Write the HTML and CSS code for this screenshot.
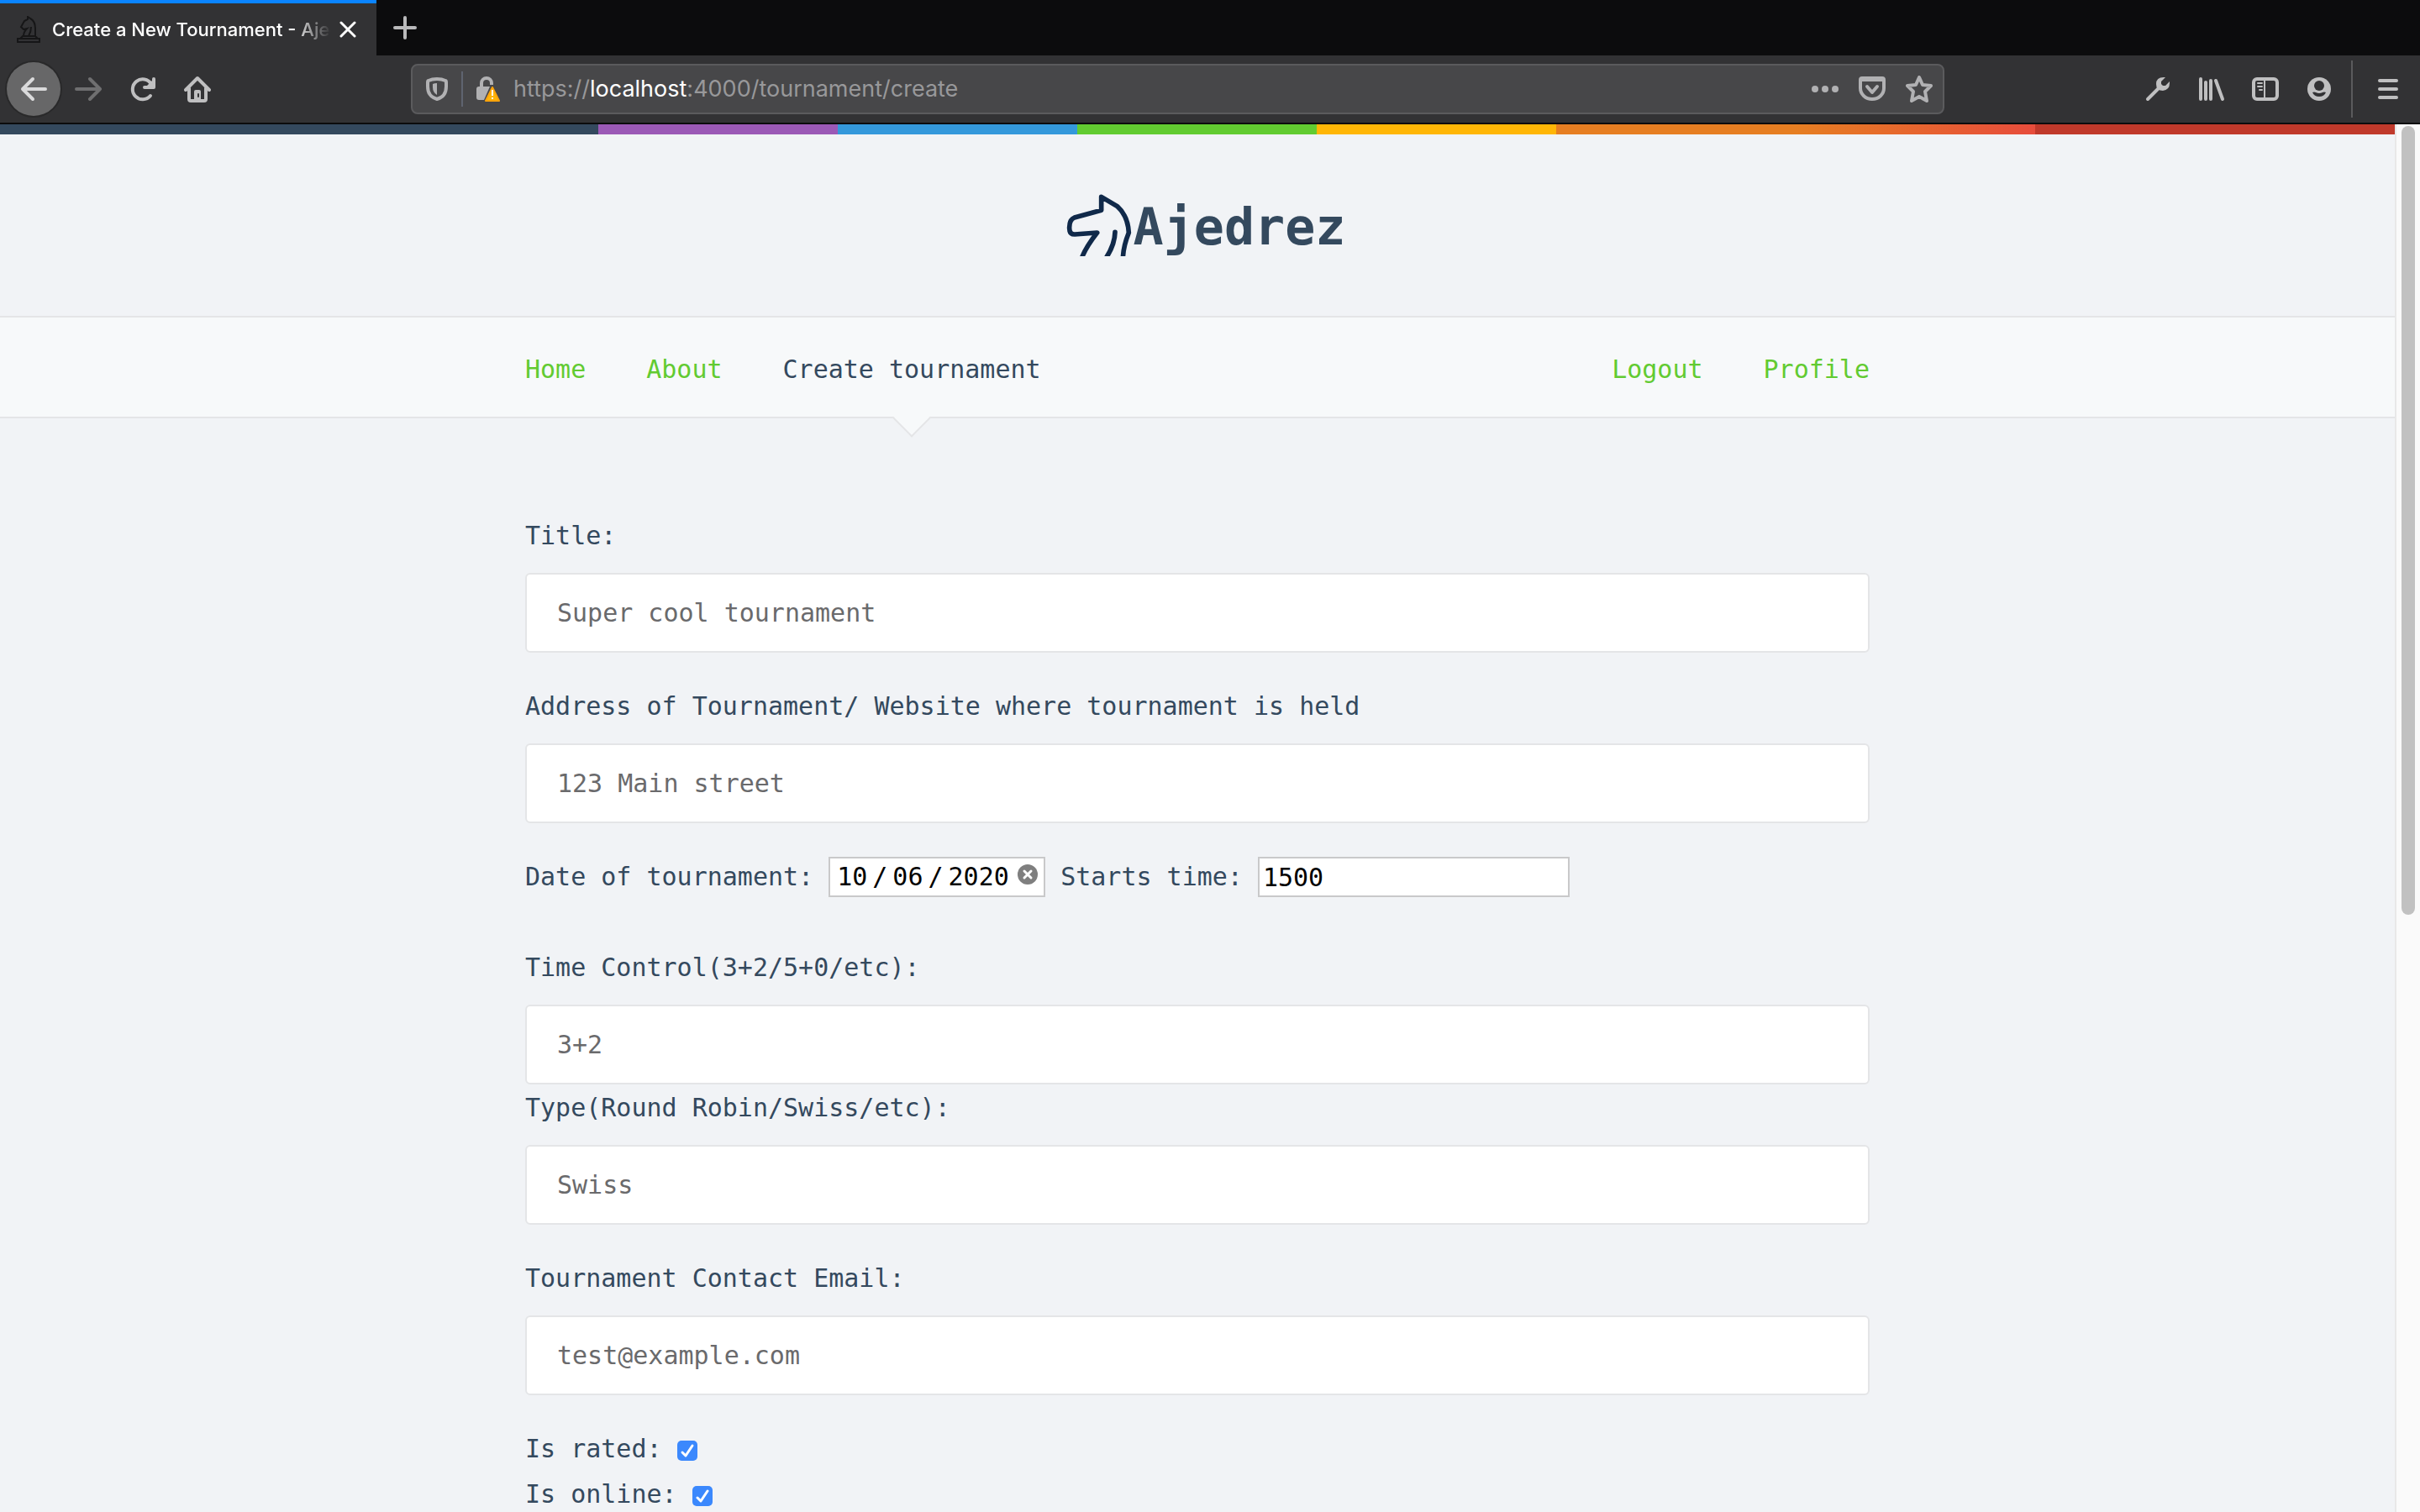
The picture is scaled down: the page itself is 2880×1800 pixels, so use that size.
FILE: index.html
```html
<!DOCTYPE html>
<html lang="en-US">
<head>
<meta charset="utf-8">
<title>Create a New Tournament - Ajedrez</title>
<link rel="stylesheet" href="styles.css">
</head>
<body>
<div class="browser">
  <div class="tabstrip">
    <div class="tab">
      <svg class="favicon" viewBox="0 0 28 32" fill="none" stroke="#161617" stroke-width="2"><path d="M1 31v-4h26v4zM4 27l3-3h15l3 3M8 24q0-5 4-9l-4 1-3-3 4-7 4-2V1l3 2q6 3 6 12v9M14 24q3-5 3-11"/></svg>
      <span class="tab-title">Create a New Tournament - Ajedrez</span>
      <button class="tab-close" aria-label="Close tab"><svg width="20" height="20" viewBox="0 0 20 20" fill="none" stroke="#fff" stroke-width="3" stroke-linecap="round"><path d="M2 2l16 16M18 2L2 18"/></svg></button>
    </div>
    <button class="new-tab" aria-label="New tab"><svg width="28" height="28" viewBox="0 0 28 28" fill="none" stroke="#b9b9ba" stroke-width="4" stroke-linecap="round"><path d="M14 2v24M2 14h24"/></svg></button>
  </div>

  <div class="toolbar">
    <div class="tool-group">
      <button class="tool tool-back" aria-label="Back"><svg class="icon" viewBox="0 0 32 32"><path d="M30 16H3M15 4L3 16l12 12"/></svg></button>
      <button class="tool tool-off" aria-label="Forward"><svg class="icon" viewBox="0 0 32 32"><path d="M2 16h28M18 4l12 12-12 12"/></svg></button>
      <button class="tool" aria-label="Reload"><svg class="icon" viewBox="0 0 32 32"><path d="M25 24a12 12 0 1 1 1-14M29 4v10h-11"/><path d="M29 4v10h-10z" fill="currentColor" stroke="none"/></svg></button>
      <button class="tool" aria-label="Home"><svg class="icon" viewBox="0 0 32 32"><path d="M2 17L16 3l14 14M6 15v13q0 2 2 2h16q2 0 2-2V15"/><path d="M12 30V19q0-2 2-2h4q2 0 2 2v11z" fill="currentColor" stroke="none"/><path d="M17 22v3" stroke="#323234" stroke-width="2"/></svg></button>
    </div>

    <div class="urlbar">
      <button class="url-shield" aria-label="Tracking protection"><svg width="26" height="28" viewBox="0 0 26 28"><path d="M13 2q6 0 10 2 1 0 1 2v5q0 12-11 15Q2 23 2 11V6q0-2 1-2 4-2 10-2z" fill="none" stroke="currentColor" stroke-width="4"/><path d="M13 7v14q-5-3-5-9V8q2-1 5-1z" fill="currentColor"/></svg></button>
      <button class="url-lock" aria-label="Connection not secure"><svg width="30" height="30" viewBox="0 0 30 30"><path d="M6 13V8a6 6 0 0 1 12 0v2" fill="none" stroke="currentColor" stroke-width="4"/><path d="M3 12h13L9 28H3q-3 0-3-3V15q0-3 3-3z" fill="currentColor"/><path d="M19 13L27 29H11z" fill="#ffb60a" stroke="#ffa40a" stroke-width="2" stroke-linejoin="round"/><path d="M19 16v7M19 25v2" stroke="#fff" stroke-width="2"/></svg></button>
      <span class="url">https://<b>localhost</b>:4000/tournament/create</span>
      <span class="url-actions">
        <button class="url-action" aria-label="Page actions"><svg width="32" height="8" viewBox="0 0 32 8" fill="currentColor"><circle cx="4" cy="4" r="4"/><circle cx="16" cy="4" r="4"/><circle cx="28" cy="4" r="4"/></svg></button>
        <button class="url-action" aria-label="Save to Pocket"><svg class="icon" viewBox="0 0 32 32"><path d="M4 3h24q2 0 2 2v10a14 13 0 0 1-28 0V5q0-2 2-2zM3 5h26M10 13l6 7 6-7"/></svg></button>
        <button class="url-action" aria-label="Bookmark"><svg class="icon" viewBox="0 0 32 32"><path d="M16 2l4 9 10 1-7 7 2 11-9-5-9 5 2-11-7-7 10-1z"/></svg></button>
      </span>
    </div>

    <button class="tool" aria-label="Tools"><svg class="icon" viewBox="0 0 32 32"><path d="M4 28L17 15"/><path d="M25 2q-11-1-11 8 0 8 8 8 8-1 8-9V7l-5 5h-3l-2-2V7z" fill="currentColor" stroke="none"/></svg></button>
    <button class="tool" aria-label="Library"><svg class="icon" viewBox="0 0 32 32"><path d="M3 4v24M9 8v20M15 6v22M21 6l8 22"/></svg></button>
    <button class="tool" aria-label="Sidebar"><svg class="icon" viewBox="0 0 32 32"><rect x="2" y="4" width="28" height="24" rx="4"/><path d="M15 4v24" stroke-width="2"/><path d="M7 9h5M7 13h5M9 17h3" stroke-width="2"/></svg></button>
    <button class="tool" aria-label="Account"><svg class="icon" viewBox="0 0 32 32"><circle cx="16" cy="16" r="14" fill="currentColor" stroke="none"/><circle cx="16" cy="12" r="6" fill="#323234" stroke="none"/><path d="M8 20q2-1 4 0 4 2 8 0 2-1 4 0-2 5-8 5t-8-5z" fill="#323234" stroke="none"/></svg></button>
    <span class="tool-divider"></span>
    <button class="tool" aria-label="Menu"><svg class="icon" viewBox="0 0 32 32"><path d="M6 6h20M6 16h20M6 26h20"/></svg></button>
  </div>

  <div class="viewport">
    <div class="page">
      <div class="stripe"></div>
      <header class="masthead">
        <svg class="logo" viewBox="86 94 300 222" fill="none" stroke="#10294a" stroke-width="17" stroke-linejoin="round" stroke-linecap="round"><path d="M200 325Q214 286 256 232L176 238Q157 238 157 216 156 186 175 178L271 152V104L328 138Q366 172 369 232 349 282 348 325M288 322Q319 274 320 230"/></svg>
        <h1 class="brand">Ajedrez</h1>
      </header>

      <nav class="nav">
        <div class="nav-inner">
          <a class="nav-link" href="#">Home</a>
          <a class="nav-link" href="#">About</a>
          <a class="nav-link nav-current" href="#">Create tournament</a>
          <a class="nav-link nav-right" href="#">Logout</a>
          <a class="nav-link" href="#">Profile</a>
        </div>
      </nav>

      <form class="form">
        <div class="field">
          <label for="title">Title:</label>
          <input class="text" id="title" type="text" placeholder="Super cool tournament">
        </div>
        <div class="field">
          <label for="address">Address of Tournament/ Website where tournament is held</label>
          <input class="text" id="address" type="text" placeholder="123 Main street">
        </div>
        <div class="when">
          <label for="date">Date of tournament:</label>
          <span class="date-wrap">
            <input class="small date" id="date" type="date" value="2020-10-06">
            <button class="date-clear" type="button" aria-label="Clear date"><svg width="24" height="24" viewBox="0 0 24 24"><circle cx="12" cy="12" r="12" fill="#7f7f7f"/><path d="M8 8l8 8M16 8l-8 8" stroke="#fff" stroke-width="3" stroke-linecap="round"/></svg></button>
          </span>
          <label for="start">Starts time:</label>
          <input class="small time" id="start" type="text" value="1500">
        </div>
        <div class="field field-tight">
          <label for="control">Time Control(3+2/5+0/etc):</label>
          <input class="text" id="control" type="text" placeholder="3+2">
        </div>
        <div class="field">
          <label for="type">Type(Round Robin/Swiss/etc):</label>
          <input class="text" id="type" type="text" placeholder="Swiss">
        </div>
        <div class="field">
          <label for="email">Tournament Contact Email:</label>
          <input class="text" id="email" type="email" placeholder="test@example.com">
        </div>
        <div class="check"><label for="rated">Is rated:</label><input class="tick" id="rated" type="checkbox" checked></div>
        <div class="check"><label for="online">Is online:</label><input class="tick" id="online" type="checkbox" checked></div>
      </form>
    </div>
    <div class="scrollbar"><div class="thumb"></div></div>
  </div>
</div>
</body>
</html>
```
FILE: styles.css
```css
* { box-sizing: border-box; }

body {
  margin: 0;
  background: #f1f3f6;
  color: #34495e;
  font: 30px/54px "DejaVu Sans Mono", "Liberation Mono", monospace;
}

button {
  display: flex;
  align-items: center;
  justify-content: center;
  padding: 0;
  border: 0;
  background: none;
  color: inherit;
}

.browser {
  display: flex;
  flex-direction: column;
  height: 100vh;
  overflow: hidden;
}

/* Tab strip */
.tabstrip {
  display: flex;
  flex: none;
  height: 66px;
  background: #0c0c0d;
}

.tab {
  display: flex;
  align-items: center;
  width: 448px;
  padding: 0 20px;
  border-top: 4px solid #0a84ff;
  background: #323234;
}

.favicon {
  flex: none;
  width: 28px;
  height: 32px;
}

.tab-title {
  flex: 1;
  margin-left: 14px;
  overflow: hidden;
  white-space: nowrap;
  color: #fff;
  font: 500 22px/32px Inter, sans-serif;
  -webkit-mask-image: linear-gradient(to right, #000 86%, transparent);
  mask-image: linear-gradient(to right, #000 86%, transparent);
}

.tab-close { width: 28px; margin-left: 6px; }
.new-tab { width: 68px; }

/* Toolbar */
.toolbar {
  display: flex;
  flex: none;
  align-items: center;
  height: 82px;
  padding: 0 6px 0 8px;
  border-bottom: 2px solid #0c0c0d;
  background: #323234;
  color: #bfbfc0;
}

.tool-group { display: flex; gap: 1px; }

.tool {
  flex: none;
  width: 64px;
  height: 64px;
}

.tool-back {
  border-radius: 50%;
  background: #676768;
  box-shadow: 0 0 0 2px #29292a;
  color: #dadadb;
}

.tool-off { color: #6f6f70; }

.icon {
  width: 32px;
  height: 32px;
  fill: none;
  stroke: currentColor;
  stroke-width: 4;
  stroke-linecap: round;
  stroke-linejoin: round;
}

.tool-divider {
  width: 2px;
  height: 68px;
  margin: 0 10px 0 6px;
  background: #5b5b5d;
}

.urlbar {
  display: flex;
  flex: 1;
  align-items: center;
  height: 60px;
  margin: 0 222px;
  padding-left: 16px;
  border: 2px solid #5b5b5d;
  border-radius: 8px;
  background: #474749;
  color: #b1b1b3;
}

.url-shield {
  height: 42px;
  padding-right: 16px;
  border-right: 2px solid #5f6470;
}

.url-lock { margin: 0 14px 0 16px; }

.url {
  color: #98989a;
  font: 27px/40px Inter, sans-serif;
}

.url b { color: #fff; font-weight: 400; }

.url-actions { display: flex; margin-left: auto; }
.url-action { width: 56px; height: 56px; }

/* Page */
.viewport {
  display: flex;
  flex: 1;
  min-height: 0;
}

.page {
  flex: 1;
  overflow: hidden;
}

.stripe {
  height: 12px;
  background: linear-gradient(to right,
    #34495e 25%, #9b59b6 25% 35%, #3498db 35% 45%, #62cb31 45% 55%,
    #ffb606 55% 65%, #e67e22 65% 75%, #e74c3c 85%, #c0392b 85%);
}

.masthead {
  display: flex;
  align-items: flex-end;
  justify-content: center;
  padding: 71px 0;
}

.logo { width: 100px; height: 74px; }

.brand {
  margin: 0;
  font-size: 60px;
  line-height: 70px;
}

.nav {
  border: solid #e4e5e7;
  border-width: 2px 0;
  background: #f7f9fa;
}

.nav-inner {
  display: flex;
  gap: 72px;
  max-width: 1600px;
  margin: 0 auto;
  padding: 35px 0 29px;
}

.nav-link {
  position: relative;
  color: #62cb31;
  text-decoration: none;
}

.nav-current { color: #34495e; }

.nav-current::after {
  content: "";
  position: absolute;
  top: 69px;
  left: 50%;
  width: 30px;
  height: 30px;
  border: solid #e4e5e7;
  border-width: 0 2px 2px 0;
  background: #f7f9fa;
  transform: translateX(-50%) rotate(45deg);
}

.nav-right { margin-left: auto; }

.form {
  max-width: 1600px;
  margin: 113px auto 0;
}

.field {
  display: flex;
  flex-direction: column;
  gap: 17px;
  margin-bottom: 37px;
}

.field-tight { margin-bottom: 1px; }

input { font: inherit; }

.text {
  height: 95px;
  padding: 0 36px;
  border: 2px solid #e4e5e7;
  border-radius: 6px;
  background: #fff;
}

.text::placeholder { color: #6a6a6c; opacity: 1; }

.when {
  display: flex;
  align-items: center;
  gap: 18px;
  margin-bottom: 54px;
}

.small {
  display: block;
  height: 48px;
  border: 2px solid #c9c9ca;
  background: #fff;
  color: #000;
  line-height: 40px;
}

.date-wrap { position: relative; }
.date { width: 258px; padding: 0 0 0 8px; }
.date::-webkit-calendar-picker-indicator { display: none; }
.date::-webkit-datetime-edit-text { padding: 0 6px; }
.date::-webkit-datetime-edit-month-field,
.date::-webkit-datetime-edit-day-field,
.date::-webkit-datetime-edit-year-field { padding: 0; }

.date-clear {
  position: absolute;
  top: 9px;
  right: 9px;
}

.time { width: 371px; padding: 0 4px; }

.check {
  display: flex;
  align-items: center;
  gap: 18px;
}

.tick {
  width: 24px;
  height: 24px;
  margin: 4px 0 0;
  border-radius: 5px;
  background: #3b88fd url("data:image/svg+xml,%3Csvg xmlns='http://www.w3.org/2000/svg' viewBox='0 0 24 24' fill='none' stroke='white' stroke-width='3' stroke-linecap='round' stroke-linejoin='round'%3E%3Cpath d='M6 14l4 4 8-12'/%3E%3C/svg%3E");
  appearance: none;
}

/* Scrollbar */
.scrollbar {
  width: 30px;
  padding: 2px 6px;
  border-left: 2px solid #e8e8e8;
  background: #fafafa;
}

.thumb {
  width: 16px;
  height: 57%;
  border-radius: 8px;
  background: #c1c1c1;
}
```
